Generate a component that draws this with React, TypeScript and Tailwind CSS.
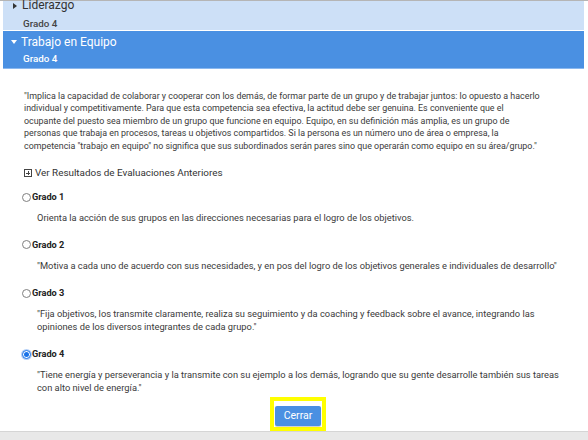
import React from "react";

const grados: { n: number; lines: string[]; checked: boolean }[] = [
  { n: 1, lines: ["Orienta la acción de sus grupos en las direcciones necesarias para el logro de los objetivos."], checked: false },
  { n: 2, lines: ["\"Motiva a cada uno de acuerdo con sus necesidades, y en pos del logro de los objetivos generales e individuales de desarrollo\""], checked: false },
  {
    n: 3,
    lines: [
      "\"Fija objetivos, los transmite claramente, realiza su seguimiento y da coaching y feedback sobre el avance, integrando las",
      "opiniones de los diversos integrantes de cada grupo.\"",
    ],
    checked: false,
  },
  {
    n: 4,
    lines: [
      "\"Tiene energía y perseverancia y la transmite con su ejemplo a los demás, logrando que su gente desarrolle también sus tareas",
      "con alto nivel de energía.\"",
    ],
    checked: true,
  },
];

const parrafo = [
  "\"Implica la capacidad de colaborar y cooperar con los demás, de formar parte de un grupo y de trabajar juntos: lo opuesto a hacerlo",
  "individual y competitivamente. Para que esta competencia sea efectiva, la actitud debe ser genuina. Es conveniente que el",
  "ocupante del puesto sea miembro de un grupo que funcione en equipo. Equipo, en su definición más amplia, es un grupo de",
  "personas que trabaja en procesos, tareas u objetivos compartidos. Si la persona es un número uno de área o empresa, la",
  "competencia \"trabajo en equipo\" no significa que sus subordinados serán pares sino que operarán como equipo en su área/grupo.\"",
];

function Radio({ checked }: { checked: boolean }) {
  return checked ? (
    <span className="w-[9px] h-[9px] rounded-full border border-[#1a73e8] bg-white flex items-center justify-center shadow-[0_0_0_1px_#b5d0f7] mr-px">
      <span className="w-[5px] h-[5px] rounded-full bg-[#1a73e8]" />
    </span>
  ) : (
    <span className="w-[9px] h-[9px] rounded-full border border-[#808080] bg-white mr-px" />
  );
}

export default function App() {
  return (
    <div className="w-[588px] h-[440px] bg-white overflow-hidden flex flex-col text-[#333]" style={{ fontFamily: "Roboto, 'Liberation Sans', sans-serif" }}>
      <div className="h-px bg-[#b5b5b5]" />
      <div className="flex-1 min-h-0 flex flex-col pl-[3px] pr-[4px]">
        <div className="h-[32px] bg-[#cde0f7] flex flex-col pl-[10px]">
          <div className="flex items-center h-[10px] text-[12px] text-[#333]">
            <span className="w-0 h-0 border-y-[3.5px] border-y-transparent border-l-[4px] border-l-[#333] mr-[5px]" />
            <span className="leading-[12px] mt-[-2px]">Liderazgo</span>
          </div>
          <div className="text-[9.8px] font-medium text-[#444] pl-[10px] mt-[7px] leading-[12px]">Grado 4</div>
        </div>
        <div className="h-px bg-white" />
        <div className="h-[40px] bg-[#4a90e2] border-b border-[#8ab8ef] flex flex-col pl-[8px] pt-[5px] text-white">
          <div className="flex items-center h-[12px] text-[12px]">
            <span className="w-0 h-0 border-x-[3.5px] border-x-transparent border-t-[4px] border-t-white mr-[4px]" />
            <span className="leading-[12px]">Trabajo en Equipo</span>
          </div>
          <div className="text-[9.8px] font-medium pl-[12px] mt-[5px] leading-[12px]">Grado 4</div>
        </div>
        <div className="flex-1 flex flex-col pl-[21px] pr-[4px] pt-[21px]">
          <div className="flex flex-col text-[8.9px] leading-[12.5px] text-[#3a3a3a] whitespace-nowrap">
            {parrafo.map((l, i) => (
              <span key={i}>{l}</span>
            ))}
          </div>
          <div className="flex items-center mt-[15px] text-[9.9px] leading-[12px] text-[#333]">
            <span className="w-[8px] h-[8px] border border-[#444] relative mr-[3px] flex items-center justify-center">
              <span className="absolute w-[4px] h-px bg-[#444]" />
              <span className="absolute w-px h-[4px] bg-[#444]" />
            </span>
            Ver Resultados de Evaluaciones Anteriores
          </div>
          <div className="flex flex-col mt-[12px] ml-[-2px]">
            {grados.map((g, i) => (
              <div key={g.n} className={i === 0 ? "" : i === 1 ? "mt-[14px]" : "mt-[15px]"}>
                <div className="flex items-center text-[9.2px] font-bold text-[#222] leading-[12px]">
                  <Radio checked={g.checked} />
                  <span>Grado {g.n}</span>
                </div>
                <div className="flex flex-col pl-[15px] mt-[9px] text-[9.3px] leading-[12.5px] text-[#3a3a3a] whitespace-nowrap">
                  {g.lines.map((l, j) => (
                    <span key={j}>{l}</span>
                  ))}
                </div>
              </div>
            ))}
          </div>
          <div className="flex justify-center mt-[3px] pr-[8px]">
            <div className="border-[4px] border-[#ffff00] p-px">
              <button className="bg-[#4a90e2] text-white text-[10.5px] w-[46px] h-[20px] rounded-[2px] leading-[20px] shadow-[0_1px_1px_rgba(0,0,0,0.2)]">Cerrar</button>
            </div>
          </div>
        </div>
      </div>
      <div className="h-[9px] shrink-0 bg-[#e8e8e8] border-t border-[#d5d5d5]" />
    </div>
  );
}
